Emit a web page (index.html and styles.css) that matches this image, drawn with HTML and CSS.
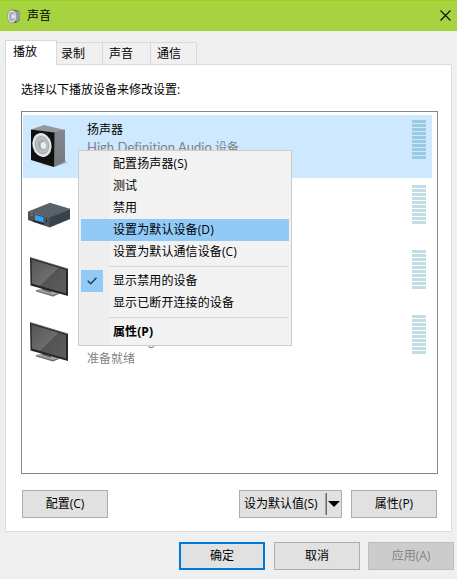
FILE: index.html
```html
<!DOCTYPE html>
<html lang="zh-CN">
<head>
<meta charset="utf-8">
<title>声音</title>
<link rel="stylesheet" href="styles.css">
</head>
<body>
<svg class="defs" width="0" height="0" aria-hidden="true">
  <defs>
    <linearGradient id="screen" x1="0" y1="0" x2="1" y2="1">
      <stop offset="0" stop-color="#555"/><stop offset=".5" stop-color="#6d6d6d"/><stop offset=".52" stop-color="#545454"/><stop offset="1" stop-color="#5d5d5d"/>
    </linearGradient>
    <linearGradient id="side" x1="0" y1="0" x2="0" y2="1">
      <stop offset="0" stop-color="#85888e"/><stop offset="1" stop-color="#74777d"/>
    </linearGradient>
    <radialGradient id="cone">
      <stop offset="0" stop-color="#e0e5e8"/><stop offset=".3" stop-color="#9fa8ab"/><stop offset=".7" stop-color="#c3cacc"/><stop offset="1" stop-color="#e5e8e9"/>
    </radialGradient>
    <symbol id="monitor" viewBox="0 0 39 41">
      <path d="M6 34l7-2 16 5-6 3.500z" fill="#a3a8ab"/>
      <path d="M6 34l17 5 6-2v1l-6 2.500-17-5z" fill="#6b7073"/>
      <path d="M12 31l9 3v3l-9-3z" fill="#63676a"/>
      <path d="M0 1.500L38 13v27L.5 29.500z" fill="#262626"/>
      <path d="M1.500 3.500L36 14v23.500L2 27.500z" fill="url(#screen)"/>
      <path d="M0 1l38 11.500v1L0 2z" fill="#666"/>
    </symbol>
  </defs>
</svg>
<header class="titlebar">
  <svg class="app-icon" width="13" height="15" viewBox="0 0 13 15">
    <path d="M5 .5l6 1 1.500 2v8L9 14H5z" fill="#62666b"/>
    <path d="M8 2l4 1v8l-3 2z" fill="#9a9da1"/>
    <ellipse cx="5" cy="7.500" rx="4.700" ry="6.500" fill="#dce0e4" stroke="#858b91" stroke-width=".7"/>
    <ellipse cx="5" cy="7.500" rx="3" ry="4.500" fill="#a4abb1"/>
    <ellipse cx="6" cy="7.500" rx="1.500" ry="2.300" fill="#edf0f3"/>
  </svg>
  <h1>声音</h1>
  <svg class="close" width="11" height="11" viewBox="0 0 11 11"><path d="M.5.5l10 10M10.500.5l-10 10" stroke="#111" stroke-width="1.200"/></svg>
</header>
<nav class="tabs">
  <div class="tab active">播放</div>
  <div class="tab t2">录制</div>
  <div class="tab t3">声音</div>
  <div class="tab t4">通信</div>
</nav>
<main class="panel">
  <p class="hint">选择以下播放设备来修改设置:</p>
  <div class="list">
    <div class="device selected">
      <div class="pic"><svg width="42" height="46" viewBox="0 0 42 46">
        <path d="M12 41l14 3 14-4-3-3z" fill="#7895ad" opacity=".4"/>
        <path d="M3 6.500L16 2l21 5-10.500 3z" fill="#95989d"/>
        <path d="M26 9.500L37 6.500V39l-11 5z" fill="url(#side)"/>
        <path d="M3 6.500l23.500 3L26 44 3 37z" fill="#111"/>
        <ellipse cx="14" cy="22" rx="8.700" ry="11.300" transform="rotate(-14 14 22)" fill="url(#cone)" stroke="#e8ebec" stroke-width="1.500"/>
        <ellipse cx="14" cy="22" rx="6.500" ry="8.500" transform="rotate(-14 14 22)" fill="none" stroke="#a2abaf"/>
        <ellipse cx="15.500" cy="22.500" rx="2.500" ry="3.500" fill="#e9eeef"/>
      </svg></div>
      <div class="info"><div class="name">扬声器</div><div class="desc"><span class="latin">High Definition Audio</span> 设备</div></div>
      <div class="meter"></div>
    </div>
    <div class="device">
      <div class="pic amp"><svg width="43" height="26" viewBox="0 0 43 26">
        <path d="M10 22l12 3.500L43 17l-3-2z" fill="#aaa" opacity=".5"/>
        <path d="M0 9.500L22 .7l20 6-20 9z" fill="#57626a"/>
        <path d="M21.500 15.500L42 6.700V17l-20.500 8.500z" fill="#394247"/>
        <path d="M0 9.500l22 6v10L0 18z" fill="#465159"/>
        <path d="M7 13l8.500 2.300v5L7 18z" fill="#35a4f3"/>
        <path d="M2.500 11.500l2.500.7v2.300l-2.500-.7z" fill="#d94949"/>
        <path d="M5 19l11 3" stroke="#20272c" stroke-width="1.300"/>
        <ellipse cx="18.500" cy="19" rx="1.200" ry="2" fill="#141a1e" stroke="#7d878c" stroke-width=".6"/>
      </svg></div>
      <div class="info"></div>
      <div class="meter"></div>
    </div>
    <div class="device">
      <div class="pic screen"><svg width="39" height="41"><use href="#monitor" width="39" height="41"/></svg></div>
      <div class="info"></div>
      <div class="meter"></div>
    </div>
    <div class="device">
      <div class="pic screen"><svg width="39" height="41"><use href="#monitor" width="39" height="41"/></svg></div>
      <div class="info low"><div class="desc"><span class="latin">NVIDIA High</span></div><div class="desc">准备就绪</div></div>
      <div class="meter"></div>
    </div>
  </div>
  <div class="actions">
    <button class="btn">配置(C)</button>
    <button class="btn split"><span>设为默认值(S)</span><i class="bar"></i><i class="arrow"></i></button>
    <button class="btn">属性(P)</button>
  </div>
</main>
<footer class="footer">
  <button class="btn primary">确定</button>
  <button class="btn">取消</button>
  <button class="btn" disabled>应用(A)</button>
</footer>
<div class="menu">
  <div class="item">配置扬声器(S)</div>
  <div class="item">测试</div>
  <div class="item">禁用</div>
  <div class="item hot">设置为默认设备(D)</div>
  <div class="item">设置为默认通信设备(C)</div>
  <hr>
  <div class="item"><span class="check"><svg width="10" height="8" viewBox="0 0 10 8"><path d="M.7 3.700l3 3L9.500.8" fill="none" stroke="#263b4c" stroke-width="1.500"/></svg></span>显示禁用的设备</div>
  <div class="item">显示已断开连接的设备</div>
  <hr>
  <div class="item bold">属性(P)</div>
</div>
</body>
</html>
```
FILE: styles.css
```css
* { box-sizing: border-box; }
body {
  margin: 0;
  width: 457px;
  height: 579px;
  overflow: hidden;
  background: #efefef;
  color: #000;
  font: 12px/16px "Open Sans", "Noto Sans CJK SC", sans-serif;
  position: relative;
}
svg { display: block; }
.defs { position: absolute; }
.titlebar {
  height: 31px;
  display: flex;
  align-items: center;
  padding: 0 6px 0 7px;
  background: #a6d33f;
  border-top: 1px solid #9bcf22;
}
.titlebar h1 { margin: 0 auto 0 7px; font-size: 12px; font-weight: 400; }
.close { margin-top: -2px; }
.tabs {
  display: flex;
  align-items: flex-end;
  height: 34px;
  padding-left: 5px;
  margin-bottom: -1px;
  position: relative;
}
.tab {
  height: 23px;
  border: 1px solid #d9d9d9;
  border-left: 0;
  padding: 3px 0 0 5px;
  background: #f0f0f0;
}
.tab.active {
  width: 52px;
  height: 25px;
  background: #fff;
  border-left: 1px solid #d9d9d9;
  border-bottom: 0;
  padding: 3px 0 0 7px;
}
.tab.t2 { width: 46px; padding-left: 4px; }
.t3 { width: 48px; padding-left: 6px; }
.t4 { width: 46px; padding-left: 6px; }
.panel {
  width: 447px;
  height: 468px;
  margin-left: 5px;
  padding: 17px 14px 13px 15px;
  background: #fff;
  border: 1px solid #dcdcdc;
}
.hint { margin: 0 0 13px; }
.list {
  width: 417px;
  height: 363px;
  border: 1px solid #828790;
  padding: 3px 5px 0 1px;
}
.device { height: 63px; margin-bottom: 2px; display: flex; }
.selected { background: #cde8ff; }
.pic { width: 64px; display: flex; align-items: center; padding-left: 5px; }
.selected .pic { padding: 0 0 1px 5px; }
.amp { padding-top: 7px; }
.screen { padding: 0 0 0 7px; }
.info { flex: 1; padding-top: 7px; }
.info.low { padding-top: 23px; }
.name { height: 17px; }
.desc { height: 17px; color: #838383; white-space: nowrap; }
.low .desc { height: 18px; }
.latin { font-family: Lato, sans-serif; font-size: 13px; letter-spacing: .05px; }
.meter {
  width: 14px;
  height: 39px;
  margin: 5px 6px 0 0;
  background: repeating-linear-gradient(#c1dde3 0 3px, transparent 3px 4px);
}
.selected .meter { background: repeating-linear-gradient(#9bcbe2 0 3px, transparent 3px 4px); }
.actions { display: flex; margin: 16px 0 0 1px; }
.btn {
  width: 86px;
  height: 28px;
  padding: 0 0 1px;
  border: 1px solid #adadad;
  border-radius: 0;
  background: #e1e1e1;
  color: #000;
  font: inherit;
}
.split {
  width: 103px;
  margin: 0 9px 0 131px;
  display: flex;
  align-items: center;
  padding-left: 4px;
  white-space: nowrap;
}
.split span { width: 81px; text-align: left; }
.bar { width: 2px; height: 22px; background: #696969; border-left: 1px solid #a0a0a0; }
.arrow { margin-left: 1px; border: 6px solid transparent; border-top-color: #000; border-bottom: 0; }
.footer { display: flex; gap: 9px; margin: 10px 0 0 179px; }
.footer .btn:last-child { margin-left: -1px; }
.primary { border: 2px solid #0078d7; }
.btn:disabled { background: #ccc; border-color: #bfbfbf; color: #838383; }
.menu {
  position: absolute;
  left: 78px;
  top: 150px;
  width: 214px;
  height: 196px;
  padding: 2px;
  border: 1px solid #ccc;
  background: linear-gradient(90deg, #eee 30px, #f2f2f2 30px);
}
.item {
  height: 22px;
  line-height: 21px;
  padding-left: 32px;
  white-space: nowrap;
  position: relative;
  letter-spacing: .1px;
}
.hot { background: #91c9f7; }
.bold { font-weight: 700; }
.menu hr { margin: 3px 0 3px 28px; border: 0; height: 1px; background: #d7d7d7; }
.check {
  position: absolute;
  left: 0;
  top: 0;
  width: 22px;
  height: 22px;
  background: #91c9f7;
  display: flex;
  align-items: center;
  justify-content: center;
}
```
